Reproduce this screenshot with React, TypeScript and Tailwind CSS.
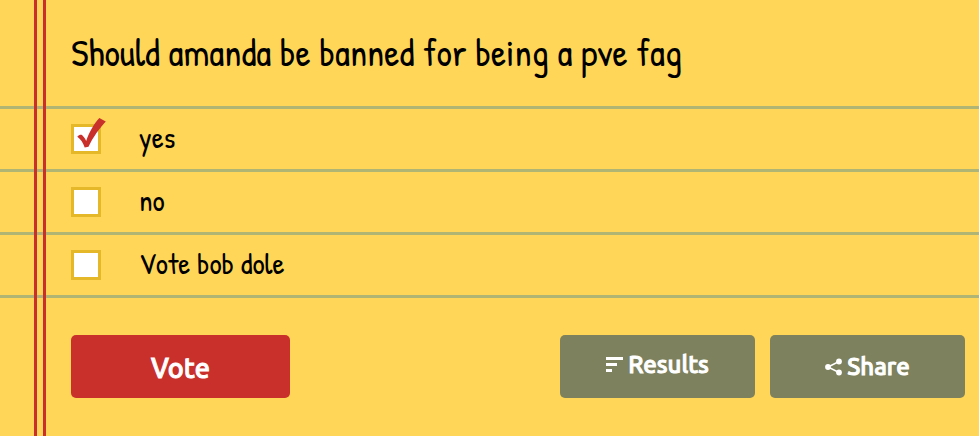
import { useState } from 'react'

const options = ['yes', 'no', 'Vote bob dole']

function CheckMark() {
  return (
    <svg viewBox="0 0 36 36" className="pointer-events-none absolute left-0 bottom-0 h-9 w-9" fill="#c9302c" aria-hidden="true">
      <path d="M6.300 18.800C8 17 9.500 16.500 11 17.100C12.500 18.500 14 20.500 15.200 23C18 14.500 23 5.500 28.300 0L34.800 3.400C29 9.500 22 19 17.500 28.700L13.700 29.500C12 24.500 9.500 21 6.300 18.800Z" />
    </svg>
  )
}

function ResultsIcon() {
  return (
    <svg viewBox="0 0 17 16" className="h-4 w-[17px]" fill="currentColor" aria-hidden="true">
      <path d="M0 0h17v3H0zM0 6h11v3H0zM0 12h6v3H0z" />
    </svg>
  )
}

function ShareIcon() {
  return (
    <svg viewBox="0 0 17 18" className="h-[18px] w-[17px]" fill="currentColor" aria-hidden="true">
      <path d="M14 3.500 3 9l11 5.500" fill="none" stroke="currentColor" strokeWidth="1.500" />
      <circle cx="14" cy="3.500" r="2.900" />
      <circle cx="3" cy="9" r="2.900" />
      <circle cx="14" cy="14.500" r="2.900" />
    </svg>
  )
}

export default function App() {
  const [checked, setChecked] = useState([0])

  const toggle = (index: number) =>
    setChecked(prev => (prev.includes(index) ? prev.filter(i => i !== index) : [...prev, index]))

  return (
    <main className="relative min-h-screen bg-[#ffd657] font-['Patrick_Hand','Open_Sans',sans-serif] text-black">
      {/* notebook margin */}
      <div className="pointer-events-none absolute inset-y-0 left-[34px] z-10 w-3 border-x-[3px] border-[#c9302c]" />

      <form onSubmit={e => e.preventDefault()}>
        <h1 className="border-b-[3px] border-[#b0b574] pt-7 pb-[30px] pl-[71px] text-[38px] leading-[48px]">
          Should amanda be banned for being a pve fag
        </h1>

        {options.map((option, index) => (
          <label
            key={option}
            className="flex h-[63px] cursor-pointer items-center border-b-[3px] border-[#b0b574] pl-[71px] text-[30px] leading-8"
          >
            <span className="relative mr-[38px] flex">
              <input
                type="checkbox"
                checked={checked.includes(index)}
                onChange={() => toggle(index)}
                className="size-[30px] appearance-none border-[3px] border-[#e5b829] bg-white"
              />
              {checked.includes(index) && <CheckMark />}
            </span>
            <span className="pb-1">{option}</span>
          </label>
        ))}

        <div className="flex items-start gap-[15px] pt-[37px] pr-[14px] pb-[38px] pl-[71px] font-['Ubuntu','Open_Sans',sans-serif] text-2xl font-medium text-white [-webkit-text-stroke:1px_white]">
          <button type="submit" className="mr-auto h-[63px] w-[219px] rounded-[5px] bg-[#c9302c] pt-1 text-[27px]">
            Vote
          </button>
          <button type="button" className="flex h-[63px] w-[195px] items-center justify-center gap-[5px] rounded-[5px] bg-[#7d815d] pb-1">
            <ResultsIcon />
            Results
          </button>
          <button type="button" className="flex h-[63px] w-[195px] items-center justify-center gap-[5px] rounded-[5px] bg-[#7d815d]">
            <ShareIcon />
            Share
          </button>
        </div>
      </form>
    </main>
  )
}
